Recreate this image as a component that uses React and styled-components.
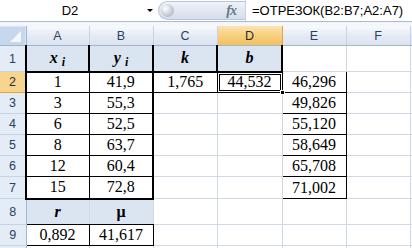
import styled, { createGlobalStyle } from "styled-components";

const GlobalStyle = createGlobalStyle`
  html, body {
    margin: 0;
    padding: 0;
    width: 412px;
    height: 248px;
    overflow: hidden;
    background: #ffffff;
  }
`;

const Window = styled.div`
  width: 412px;
  height: 248px;
  overflow: hidden;
  background: #ffffff;
  font-family: "Liberation Sans", Arial, sans-serif;
`;

const FormulaBar = styled.div`
  display: flex;
  height: 21px;
  border-bottom: 1px solid #a7bad3;
  background: #ffffff;
`;

const Gap = styled.div`
  height: 4px;
  background: #f4f6fa;
`;

const NameBox = styled.div`
  position: relative;
  width: 158px;
  display: flex;
  align-items: center;
  justify-content: center;
  padding-right: 18px;
  box-sizing: border-box;
  font-size: 13px;
  color: #000;
`;

const DropArrow = styled.span`
  position: absolute;
  right: 5px;
  top: 9px;
  width: 0;
  height: 0;
  border-left: 3px solid transparent;
  border-right: 3px solid transparent;
  border-top: 3px solid #000;
`;

const Pill = styled.div`
  display: flex;
  align-items: center;
  width: 87px;
  margin-top: 1px;
  height: 19px;
  border-radius: 10px 0 0 10px;
  background: linear-gradient(#eef2f8, #d5deea);
  border: 1px solid #b7c6da;
  border-right: none;
  box-sizing: border-box;
  padding-left: 2px;
`;

const Knob = styled.span`
  width: 13px;
  height: 13px;
  border-radius: 50%;
  background: radial-gradient(circle at 35% 35%, #ffffff, #c4c9d1 60%, #9aa2ad);
`;

const Fx = styled.span`
  margin-left: auto;
  margin-right: 9px;
  font-family: "Liberation Serif", serif;
  font-style: italic;
  font-weight: bold;
  font-size: 14px;
  color: #6c7686;
  letter-spacing: -1px;
`;

const FormulaInput = styled.div`
  flex: 1;
  display: flex;
  align-items: center;
  padding-left: 6px;
  border-left: 1px solid #c8d3e1;
  font-size: 13px;
  color: #000;
  white-space: nowrap;
`;

const Sheet = styled.table`
  border-collapse: collapse;
  table-layout: fixed;
  width: 470px;
`;

const ColHead = styled.th`
  height: 19px;
  padding: 0;
  font-weight: normal;
  font-size: 12.5px;
  color: ${(p) => (p.$active ? "#2a2a2a" : "#27415f")};
  background: ${(p) =>
    p.$active
      ? "linear-gradient(#fbe3b2, #f6cd7a 55%, #f2c15d)"
      : "linear-gradient(#f7f9fc, #e4eaf3 55%, #dbe3ee)"};
  border-right: 1px solid ${(p) => (p.$active ? "#e2a63e" : "#c5d3e3")};
  border-bottom: 1px solid #9eb6ce;
  text-align: center;
  vertical-align: middle;
`;

const Corner = styled.th`
  padding: 0;
  border-right: 1px solid #9eb6ce;
  border-bottom: 1px solid #9eb6ce;
  background: #dbe4f0;
  vertical-align: bottom;
  line-height: 0;
`;

const RowHead = styled.th`
  padding: 0;
  font-weight: normal;
  font-size: 12.5px;
  color: ${(p) => (p.$active ? "#2a2a2a" : "#27415f")};
  background: ${(p) => (p.$active ? "#f8d58e" : "#e4ecf7")};
  border-right: 1px solid ${(p) => (p.$active ? "#e2a63e" : "#9eb6ce")};
  border-bottom: 1px solid ${(p) => (p.$active ? "#e2a63e" : "#c5d3e3")};
  text-align: center;
  vertical-align: middle;
`;

const line = (v) =>
  v === "thick" ? "2px solid #000" : v === "thin" ? "1px solid #000" : "1px solid #d0d7e5";

const Cell = styled.td`
  position: relative;
  padding: 0;
  font-family: "Liberation Serif", "Times New Roman", serif;
  font-size: 16px;
  color: #000;
  text-align: center;
  vertical-align: middle;
  white-space: nowrap;
  background: ${(p) => (p.$fill ? "#dbe5f1" : "#ffffff")};
  font-weight: ${(p) => (p.$bold ? "bold" : "normal")};
  font-style: ${(p) => (p.$italic ? "italic" : "normal")};
  border-top: ${(p) => line(p.$bt)};
  border-right: ${(p) => line(p.$br)};
  border-bottom: ${(p) => line(p.$bb)};
  border-left: ${(p) => line(p.$bl)};
`;

const Sub = styled.span`
  font-size: 12px;
  position: relative;
  top: 3px;
`;

const Selection = styled.span`
  position: absolute;
  inset: 1px;
  border: 1px solid #000;
  pointer-events: none;
`;

const FillHandle = styled.span`
  position: absolute;
  right: -3px;
  bottom: -3px;
  width: 5px;
  height: 5px;
  background: #000;
  border: 1px solid #fff;
  box-sizing: border-box;
  z-index: 2;
`;

const columns = ["A", "B", "C", "D", "E", "F", ""];
const widths = [26, 63, 64, 64, 65, 64, 64, 60];
const heights = [26, 21, 21, 21, 21, 21, 22, 26, 21, 21];

const head = { $fill: true, $bold: true, $italic: true, $br: "thick", $bl: "thick", $bb: "thick" };
const thin = { $bt: "thin", $br: "thin", $bb: "thin", $bl: "thin" };

const xs = ["1", "3", "6", "8", "12", "15"];
const ys = ["41,9", "55,3", "52,5", "63,7", "60,4", "72,8"];
const es = ["46,296", "49,826", "55,120", "58,649", "65,708", "71,002"];

function buildRows() {
  const rows = [];
  rows.push([
    { ...head, v: <>x <Sub>i</Sub></> },
    { ...head, v: <>y <Sub>i</Sub></> },
    { ...head, v: "k" },
    { ...head, v: "b" },
    {},
    {},
    {},
  ]);
  xs.forEach((x, i) => {
    const last = i === xs.length - 1;
    rows.push([
      { v: x, $bl: "thick", $br: "thin", $bb: last ? "thick" : "thin" },
      { v: ys[i], $bl: "thin", $br: "thick", $bb: last ? "thick" : "thin" },
      i === 0 ? { ...thin, v: "1,765" } : {},
      i === 0 ? { ...thin, v: "44,532", active: true } : {},
      { ...thin, v: es[i] },
      {},
      {},
    ]);
  });
  rows.push([
    { $fill: true, $bold: true, $italic: true, $bb: "thin", v: "r" },
    { $fill: true, $bold: true, $bb: "thin", v: "μ" },
    {},
    {},
    {},
    {},
    {},
  ]);
  rows.push([
    { ...thin, v: "0,892" },
    { ...thin, v: "41,617" },
    {},
    {},
    {},
    {},
    {},
  ]);
  rows.push([{}, {}, {}, {}, {}, {}, {}]);
  return rows;
}

export default function App() {
  const rows = buildRows();
  return (
    <Window>
      <GlobalStyle />
      <FormulaBar>
        <NameBox>
          D2
          <DropArrow />
        </NameBox>
        <Pill>
          <Knob />
          <Fx>fx</Fx>
        </Pill>
        <FormulaInput>=ОТРЕЗОК(B2:B7;A2:A7)</FormulaInput>
      </FormulaBar>
      <Gap />
      <Sheet>
        <colgroup>
          {widths.map((w, i) => (
            <col key={i} style={{ width: w }} />
          ))}
        </colgroup>
        <thead>
          <tr>
            <Corner>
              <svg width="25" height="18" viewBox="0 0 25 18">
                <rect width="25" height="18" fill="#c7d8ee" />
                <polygon points="21,4 21,15 10,15" fill="#f4f8fd" />
              </svg>
            </Corner>
            {columns.map((c, i) => (
              <ColHead key={i} $active={c === "D"}>
                {c}
              </ColHead>
            ))}
          </tr>
        </thead>
        <tbody>
          {rows.map((r, ri) => (
            <tr key={ri} style={{ height: heights[ri] }}>
              <RowHead $active={ri === 1}>{ri < 9 ? ri + 1 : ""}</RowHead>
              {r.map(({ v, active, ...rest }, ci) => (
                <Cell key={ci} {...rest}>
                  {v}
                  {active && (
                    <>
                      <Selection />
                      <FillHandle />
                    </>
                  )}
                </Cell>
              ))}
            </tr>
          ))}
        </tbody>
      </Sheet>
    </Window>
  );
}
